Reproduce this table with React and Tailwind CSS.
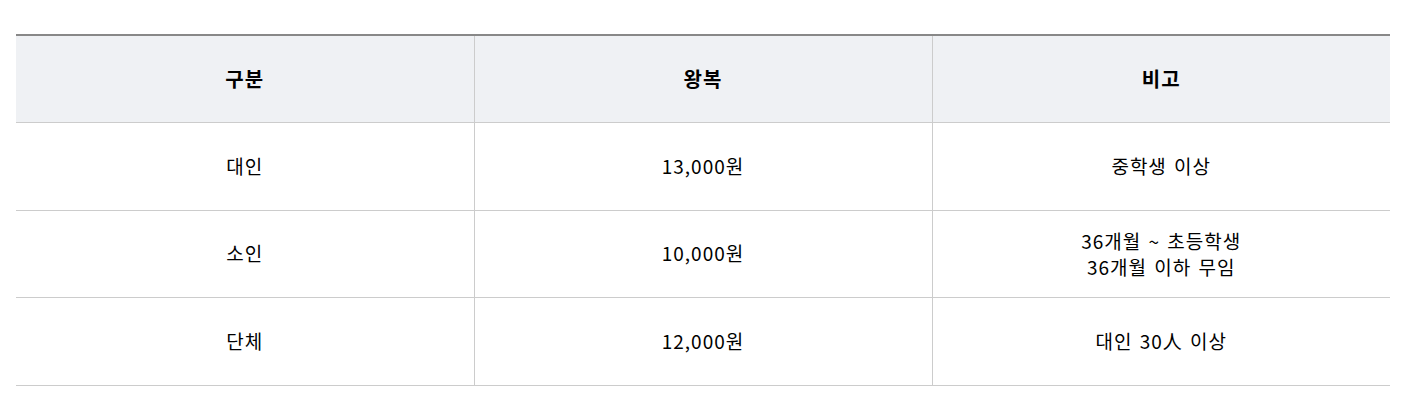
const rows = [
  { type: '대인', price: '13,000원', note: ['중학생 이상'], h: 'h-[88px]' },
  { type: '소인', price: '10,000원', note: ['36개월 ~ 초등학생', '36개월 이하 무임'], h: 'h-[87px]' },
  { type: '단체', price: '12,000원', note: ['대인 30人 이상'], h: 'h-[88px]' },
];

export default function App() {
  return (
    <div
      className="bg-white w-[1424px] h-[406px] pt-[34px] pl-4 pr-[34px]"
      style={{ fontFamily: '"Noto Sans CJK KR", "Noto Sans", sans-serif' }}
    >
      <table className="w-full table-fixed border-collapse border-t-2 border-[#888888] text-[19px] tracking-[1px] text-[#000000]">
        <thead>
          <tr className="bg-[#eff1f4]">
            {['구분', '왕복', '비고'].map((h, i) => (
              <th
                key={h}
                className={`h-[87px] font-bold text-[20px] border-b border-[#cccccc] ${i > 0 ? 'border-l' : ''}`}
              >
                {h}
              </th>
            ))}
          </tr>
        </thead>
        <tbody>
          {rows.map((r) => (
            <tr key={r.type}>
              <td className={`${r.h} text-center border-b border-[#cccccc]`}>{r.type}</td>
              <td className={`${r.h} text-center border-b border-l border-[#cccccc]`}>{r.price}</td>
              <td className={`${r.h} text-center border-b border-l border-[#cccccc] leading-[26px] [word-spacing:2px]`}>
                {r.note.map((n) => (
                  <div key={n}>{n}</div>
                ))}
              </td>
            </tr>
          ))}
        </tbody>
      </table>
    </div>
  );
}
